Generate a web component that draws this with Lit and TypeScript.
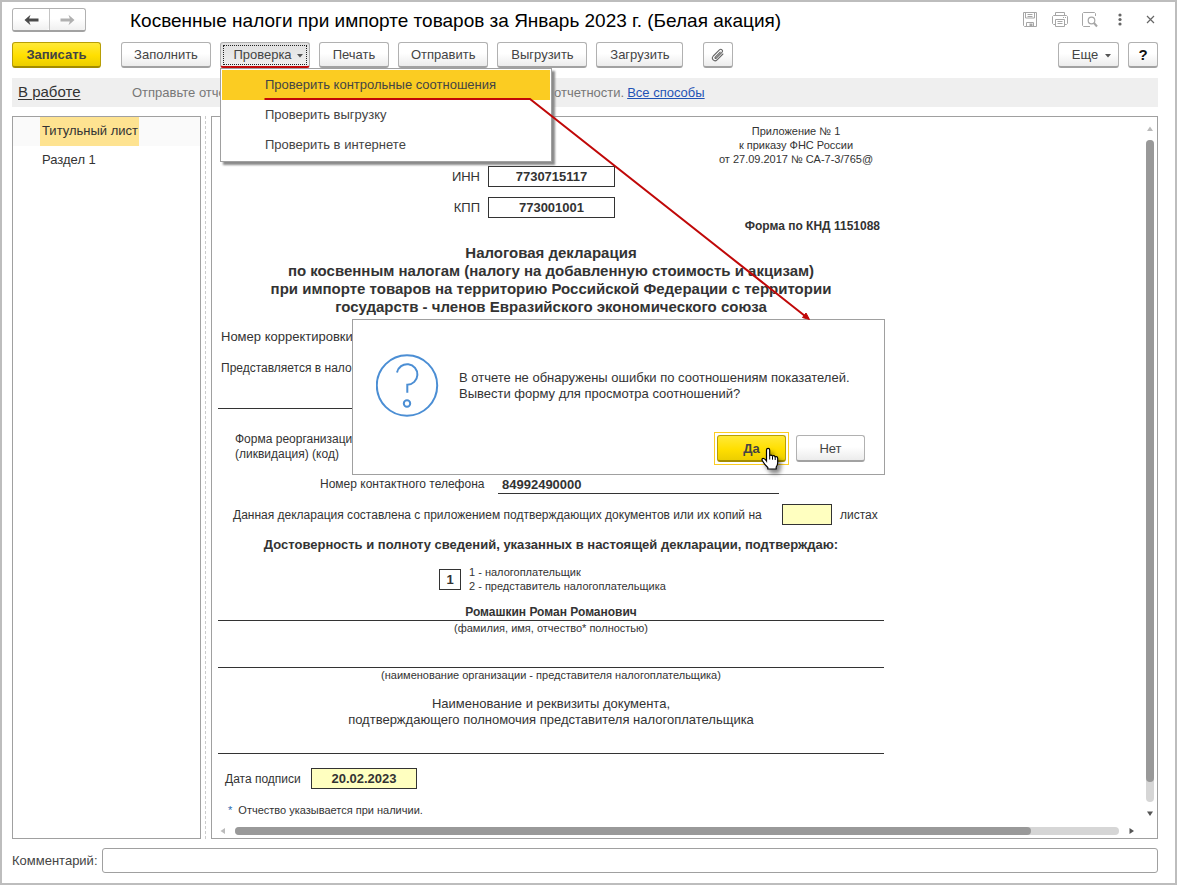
import { LitElement, html, css, svg } from "lit";
import { customElement, state } from "lit/decorators.js";

const caret = html`<svg class="caret" width="6" height="4" viewBox="0 0 6 4" aria-hidden="true"><path d="M0 0h6L3 3.5z" fill="#555" /></svg>`;

const arrow = (color: string, flip: boolean) => html`<svg width="15" height="12" viewBox="0 0 15 12" aria-hidden="true">
  <g transform=${flip ? "translate(15 0) scale(-1 1)" : ""}>${svg`<path d="M0.5 6 6.5 0.8 5.2 4.6H14.5V7.4H5.2L6.5 11.2Z" fill=${color} />`}</g>
</svg>`;

@customElement("command-bar")
class CommandBar extends LitElement {
  @state() menuOpen = true;

  static styles = css`
    :host { display: flex; gap: 9px; }
    button, .item { font: 13px/16px "Liberation Sans", Arial, sans-serif; color: #444; }
    button {
      box-sizing: border-box; height: 26px; min-width: 90px; padding: 1px 12px 0;
      border: 1px solid #b1b1b1; border-bottom: 2px solid #a2a2a2; border-radius: 3px;
      background: linear-gradient(#fff 45%, #ececec);
      display: flex; align-items: center; justify-content: center; gap: 5px; white-space: nowrap;
    }
    .primary {
      min-width: 89px; margin-right: 11px; font-weight: bold;
      border-color: #b79e06; border-bottom-color: #a38c00;
      background: linear-gradient(#ffe938, #ffdf00 55%, #ecce00);
    }
    .short { min-width: 70px; }
    .last { min-width: 87px; margin-right: 11px; }
    .square { min-width: 30px; padding: 0; }
    .more { min-width: 61px; margin-left: auto; padding: 1px 6px 0 12px; gap: 7px; }
    .help { font-weight: bold; font-size: 15px; color: #111; }
    .drop { position: relative; }
    .drop > button {
      padding: 1px 6px 0 12px; border-bottom-color: #c20a0a;
      background: linear-gradient(#e0e0e0, #f0f0f0);
      outline: 1px dotted #222; outline-offset: -4px;
    }
    .menu {
      position: absolute; z-index: 2; top: 26px; left: 0; width: 332px; box-sizing: border-box;
      padding: 1px; border: 1px solid #a0a0a0; background: #fff;
      box-shadow: 3px 3px 2px #8a8a8a;
    }
    .item {
      display: flex; justify-content: flex-start; width: 100%; height: 30px; padding: 0 0 0 43px;
      border: 0; border-radius: 0; background: #fff;
    }
    .item.active { background: #fbcc22; color: #444; }
    .caret { margin-top: 2px; }
  `;

  render() {
    return html`
      <button class="primary">Записать</button>
      <button>Заполнить</button>
      <div class="drop">
        <button aria-haspopup="menu" aria-expanded=${this.menuOpen} @click=${() => (this.menuOpen = !this.menuOpen)}>Проверка${caret}</button>
        ${this.menuOpen
          ? html`<div class="menu" role="menu">
              <button class="item active" role="menuitem">Проверить контрольные соотношения</button>
              <button class="item" role="menuitem">Проверить выгрузку</button>
              <button class="item" role="menuitem">Проверить в интернете</button>
            </div>`
          : ""}
      </div>
      <button class="short">Печать</button>
      <button>Отправить</button>
      <button>Выгрузить</button>
      <button class="last">Загрузить</button>
      <button class="square" aria-label="Вложения">
        <svg width="14" height="14" viewBox="0 0 14 14" fill="none" stroke="#666" stroke-width="1.1" stroke-linecap="round">
          <path d="M9.2 4.2 4.3 9.1c-.8.9.2 1.8 1 1l5.6-5.7c1.7-1.9-.7-4.2-2.5-2.5L2.3 8c-2.600 2.800 1.100 6.400 3.800 3.800l5.800-5.800" />
        </svg>
      </button>
      <button class="more">Еще${caret}</button>
      <button class="square help">?</button>
    `;
  }
}

@customElement("tax-form")
class TaxForm extends LitElement {
  static styles = css`
    :host { display: block; width: 666px; padding: 7px 0 0 6px; color: #333; font: 13px/16px "Liberation Sans", Arial, sans-serif; }
    p, h1, h2 { margin: 0; }
    .small { font-size: 11px; line-height: 14px; }
    .center { text-align: center; }
    .appendix { width: 176px; margin-left: auto; }
    .row { display: flex; align-items: center; gap: 8px; }
    .code { margin-bottom: 10px; }
    .code label { width: 262px; text-align: right; }
    .code + .code { margin-bottom: 0; }
    input {
      box-sizing: border-box; height: 21px; padding: 0; margin: 0; border: 1px solid #333; border-radius: 0;
      background: #fff; color: #333; text-align: center; font: bold 13px/16px "Liberation Sans", Arial, sans-serif;
    }
    .code input { width: 127px; }
    .yellow { background: #ffffc0; }
    .knd { margin-top: 0; padding-right: 4px; text-align: right; font-weight: bold; font-size: 12px; }
    h1 { margin-top: 10px; font-size: 15px; line-height: 18px; text-align: center; }
    .field { margin: 13px 0 15px 3px; }
    .office { margin-left: 3px; font-size: 12px; }
    .rule { border-top: 1px solid #333; margin-top: 32px; }
    .reorg { margin: 23px 0 10px 17px; font-size: 12px; line-height: 15px; }
    .phone, .sheets, .date { font-size: 12px; }
    .phone { margin-left: 102px; }
    .phone label { min-width: 170px; padding-top: 2px; }
    .phone input { width: 281px; height: 22px; padding: 4px 0 0 4px; border-width: 0 0 1px; text-align: left; }
    .sheets { margin: 10px 0 11px 15px; }
    .sheets label { min-width: 541px; white-space: nowrap; }
    .sheets input { width: 50px; }
    h2 { font-size: 13px; line-height: 18px; text-align: center; }
    .who { margin: 11px 0 12px 221px; }
    .who input { width: 22px; }
    .name { line-height: 15px; font-weight: bold; font-size: 12px; border-bottom: 1px solid #333; }
    .proxy { margin: 14px 0 25px; }
    .end { margin-top: 0; }
    .date { margin: 14px 0 14px 7px; }
    .date label { min-width: 78px; }
    .date input { width: 106px; }
    .note { margin-left: 10px; }
    .star { color: #2a6ab0; margin-right: 3px; }
  `;

  render() {
    return html`
      <div class="appendix small center">Приложение № 1<br />к приказу ФНС России<br />от 27.09.2017 № СА-7-3/765@</div>
      <div class="row code"><label for="inn">ИНН</label><input id="inn" .value=${"7730715117"} /></div>
      <div class="row code"><label for="kpp">КПП</label><input id="kpp" .value=${"773001001"} /></div>
      <p class="knd">Форма по КНД 1151088</p>
      <h1>
        Налоговая декларация<br />по косвенным налогам (налогу на добавленную стоимость и акцизам)<br />при импорте товаров
        на территорию Российской Федерации с территории<br />государств - членов Евразийского экономического союза
      </h1>
      <p class="field">Номер корректировки</p>
      <p class="office">Представляется в налоговый орган</p>
      <div class="rule"></div>
      <p class="reorg">Форма реорганизации<br />(ликвидация) (код)</p>
      <div class="row phone"><label for="phone">Номер контактного телефона</label><input id="phone" .value=${"84992490000"} /></div>
      <div class="row sheets">
        <label for="sheets">Данная декларация составлена с приложением подтверждающих документов или их копий на</label>
        <input id="sheets" class="yellow" /><span>листах</span>
      </div>
      <h2>Достоверность и полноту сведений, указанных в настоящей декларации, подтверждаю:</h2>
      <div class="row who">
        <input id="who" .value=${"1"} />
        <label class="small" for="who">1 - налогоплательщик<br />2 - представитель налогоплательщика</label>
      </div>
      <p class="name center">Ромашкин Роман Романович</p>
      <p class="small center">(фамилия, имя, отчество* полностью)</p>
      <div class="rule"></div>
      <p class="small center">(наименование организации - представителя налогоплательщика)</p>
      <p class="proxy center">Наименование и реквизиты документа,<br />подтверждающего полномочия представителя налогоплательщика</p>
      <div class="rule end"></div>
      <div class="row date"><label for="date">Дата подписи</label><input id="date" class="yellow" .value=${"20.02.2023"} /></div>
      <p class="small note"><span class="star">*</span> Отчество указывается при наличии.</p>
    `;
  }
}

@customElement("question-dialog")
class QuestionDialog extends LitElement {
  static styles = css`
    :host {
      display: block; box-sizing: border-box; width: 533px; padding: 34px 19px 9px 23px;
      border: 1px solid #a0a0a0; background: #fff; color: #333; font: 13px/16px "Liberation Sans", Arial, sans-serif;
    }
    .body { display: flex; align-items: center; gap: 20px; }
    p { margin: 0; }
    .buttons { display: flex; justify-content: flex-end; align-items: center; gap: 7px; margin-top: 15px; }
    button {
      box-sizing: border-box; width: 69px; height: 27px; padding: 1px 0 0; font: 13px/16px "Liberation Sans", Arial, sans-serif; color: #444;
      border: 1px solid #b1b1b1; border-bottom: 2px solid #a2a2a2; border-radius: 3px; background: linear-gradient(#fff 45%, #ececec);
    }
    .focus { position: relative; padding: 2px; border: 1px solid #fbcc22; display: flex; }
    .focus button {
      font-weight: bold; border-color: #b79e06; border-bottom-color: #a38c00;
      background: linear-gradient(#ffe938, #ffdf00 55%, #ecce00);
    }
    .hand { position: absolute; left: 46px; top: 14px; filter: drop-shadow(3px 4px 2px #0007); }
  `;

  render() {
    return html`
      <div class="body">
        <svg width="63" height="63" viewBox="0 0 63 63" fill="none" stroke="#4b8ed4" stroke-width="2" aria-hidden="true">
          <circle cx="31" cy="31.500" r="30.200" />
          <path d="M21 18.500a10.300 10.300 0 1 1 10.300 12.300v8" />
          <circle cx="31" cy="49.500" r="3.200" />
        </svg>
        <p>В отчете не обнаружены ошибки по соотношениям показателей.<br />Вывести форму для просмотра соотношений?</p>
      </div>
      <div class="buttons">
        <div class="focus">
          <button>Да</button>
          <svg class="hand" width="20" height="24" viewBox="0 0 20 24" aria-hidden="true">
            <path
              d="M5.500 14V3a1.600 1.600 0 0 1 3.200 0v5.500q1.600-1 2.800.5 1.700-.8 2.600.8 2.400-.8 2.600 1.700v4q0 2.500-1.500 4.500v2H6.800v-1.500Q3.500 17.500 1.200 13.500q-.8-2.300 1.500-2 1.500.6 2.800 2.500Z"
              fill="#fff" stroke="#000" stroke-width="1.200"
            />
            <path d="M8.700 8.500v4M11.500 9.200v3.500M14.200 10v3" stroke="#000" stroke-width="1" fill="none" />
          </svg>
        </div>
        <button>Нет</button>
      </div>
    `;
  }
}

@customElement("app-root")
class AppRoot extends LitElement {
  static styles = css`
    :host {
      position: relative; display: flex; flex-direction: column; box-sizing: border-box; height: 100vh; overflow: hidden;
      padding: 6px 17px 10px 10px; border: 2px solid #bdbdbd; background: #fff;
      color: #444; font: 13px/16px "Liberation Sans", Arial, sans-serif;
    }
    header { display: flex; align-items: center; height: 24px; margin-bottom: 10px; }
    .nav { display: flex; box-sizing: border-box; height: 24px; border: 1px solid #b1b1b1; border-bottom: 2px solid #a2a2a2; border-radius: 3px; }
    .nav button { width: 36px; padding: 0; border: 0; background: linear-gradient(#fff 45%, #f0f0f0); border-radius: 3px; }
    .nav button + button { border-left: 1px solid #c4c4c4; border-radius: 0 3px 3px 0; }
    .nav svg { display: block; margin: 0 auto; }
    .title { flex: 1; margin: 0 0 0 44px; padding-top: 1px; color: #000; font-size: 19px; line-height: 24px; font-weight: normal; }
    .tools { display: flex; gap: 14px; }
    .tools button { width: 16px; height: 16px; padding: 0; border: 0; background: none; }
    .tools svg { display: block; }
    .info { display: flex; align-items: center; height: 29px; margin: 10px 0 9px; padding: 0 6px; background: #efefef; color: #777; white-space: nowrap; }
    .state { width: 114px; }
    .state a { color: #333; font-size: 15px; text-underline-offset: 2px; }
    .hint { width: 422px; }
    .info .all { margin-left: 3px; color: #1f53b5; }
    main { flex: 1; min-height: 0; display: flex; }
    .tree { box-sizing: border-box; width: 189px; border: 1px solid #a0a0a0; }
    .leaf { display: flex; height: 29px; padding-left: 27px; color: #333; text-decoration: none; }
    .leaf span { padding: 6px 1px 7px 2px; }
    .leaf.current { background: #fafafa; }
    .leaf.current span { background: #fee391; }
    .splitter { width: 4px; margin: 0 5px 0 0; border-right: 1px dashed #ccc; }
    .sheet {
      flex: 1; min-width: 0; box-sizing: border-box; display: grid; grid-template: 1fr 14px / 1fr 14px;
      border: 1px solid #a0a0a0;
    }
    .view { overflow: hidden; min-width: 0; min-height: 0; }
    .bar { display: flex; align-items: center; justify-content: space-between; }
    .vertical { flex-direction: column; padding: 9px 0; margin-bottom: -1px; }
    .horizontal { padding: 0 9px 0 8px; }
    .track { flex: 1; border-radius: 4px; background: #d6d6d6; }
    .thumb { border-radius: 4px; background: #999; }
    .vertical .track { width: 8px; margin: 9px 0; }
    .vertical .thumb { height: 97%; }
    .horizontal .track { height: 8px; margin: 0 10px; }
    .horizontal .thumb { height: 8px; width: 90%; }
    .comment { display: flex; align-items: center; gap: 4px; margin-top: 9px; }
    .comment input { flex: 1; box-sizing: border-box; height: 25px; padding: 0 6px; border: 1px solid #a0a0a0; border-radius: 3px; font: inherit; }
    question-dialog { position: absolute; left: 350px; top: 317px; }
    .callout { position: absolute; left: 0; top: 0; z-index: 3; pointer-events: none; }
  `;

  render() {
    return html`
      <header>
        <div class="nav">
          <button aria-label="Назад">${arrow("#4a4a4a", false)}</button>
          <button aria-label="Вперед">${arrow("#b0b0b0", true)}</button>
        </div>
        <h1 class="title">Косвенные налоги при импорте товаров за Январь 2023 г. (Белая акация)</h1>
        <div class="tools">
          <button aria-label="Сохранить">
            <svg width="16" height="16" viewBox="0 0 16 16" fill="none" stroke="#a6a6a6">
              <path d="M1.500.500h13v14h-12l-1-1zM3.500.500v5.500h9V.500M5.500 2.500h5M5.500 4.500h5M4.500 14.500v-4h7v4" /><path d="M7.500 11.500h3v3h-3z" fill="#a6a6a6" stroke="none" />
            </svg>
          </button>
          <button aria-label="Печать">
            <svg width="16" height="16" viewBox="0 0 16 16" fill="none" stroke="#a6a6a6">
              <path d="M3.500 3.500v-3h9v3M3.500 12.500h-2l-1-1v-7l1-1h13l1 1v7l-1 1h-2M3.500 7.500h9v7h-9zM5.500 9.500h5M5.500 11.500h5M11 5.500h1M13 5.500h1" />
            </svg>
          </button>
          <button aria-label="Просмотр">
            <svg width="16" height="16" viewBox="0 0 16 16" fill="none" stroke="#a6a6a6">
              <path d="M13.500 4V1.500l-1-1h-11l-1 1v12l1 1H8" /><circle cx="9.500" cy="8.500" r="3.300" stroke-width="1.200" /><path d="m12 11 3 3.500" stroke-width="2" />
            </svg>
          </button>
          <button aria-label="Меню">
            <svg width="16" height="16" viewBox="0 0 16 16" fill="#666"><circle cx="8" cy="3" r="1.600" /><circle cx="8" cy="7.500" r="1.600" /><circle cx="8" cy="12" r="1.600" /></svg>
          </button>
          <button aria-label="Закрыть">
            <svg width="16" height="16" viewBox="0 0 16 16" stroke="#666" stroke-width="1.200"><path d="m5 4 7 7M12 4l-7 7" /></svg>
          </button>
        </div>
      </header>

      <command-bar></command-bar>

      <div class="info">
        <span class="state"><a href="#state">В работе</a></span>
        <span class="hint">Отправьте отчет</span>
        <span>отчетности.</span>
        <a class="all" href="#all">Все способы</a>
      </div>

      <main>
        <nav class="tree">
          <a class="leaf current" href="#title"><span>Титульный лист</span></a>
          <a class="leaf" href="#part1"><span>Раздел 1</span></a>
        </nav>
        <div class="splitter"></div>
        <section class="sheet">
          <div class="view"><tax-form></tax-form></div>
          <div class="bar vertical">
            <svg width="6" height="5" viewBox="0 0 6 5"><path d="M0 5h6L3 .500z" fill="#bbb" /></svg>
            <div class="track"><div class="thumb"></div></div>
            <svg width="6" height="5" viewBox="0 0 6 5"><path d="M0 .500h6L3 5z" fill="#555" /></svg>
          </div>
          <div class="bar horizontal">
            <svg width="5" height="6" viewBox="0 0 5 6"><path d="M5 0v6L.500 3z" fill="#bbb" /></svg>
            <div class="track"><div class="thumb"></div></div>
            <svg width="5" height="6" viewBox="0 0 5 6"><path d="M.500 0v6L5 3z" fill="#555" /></svg>
          </div>
        </section>
      </main>

      <div class="comment"><label for="comment">Комментарий:</label><input id="comment" /></div>

      <question-dialog role="dialog"></question-dialog>

      <svg class="callout" width="820" height="330" viewBox="2 2 820 330" fill="none" stroke="#c00808" stroke-width="2" aria-hidden="true">
        <path d="M264.500 99H530L805 316" />
        <path d="m809.500 319.500-7-2 3.500-4.500z" fill="#c00808" stroke-width="1" />
      </svg>
    `;
  }
}
